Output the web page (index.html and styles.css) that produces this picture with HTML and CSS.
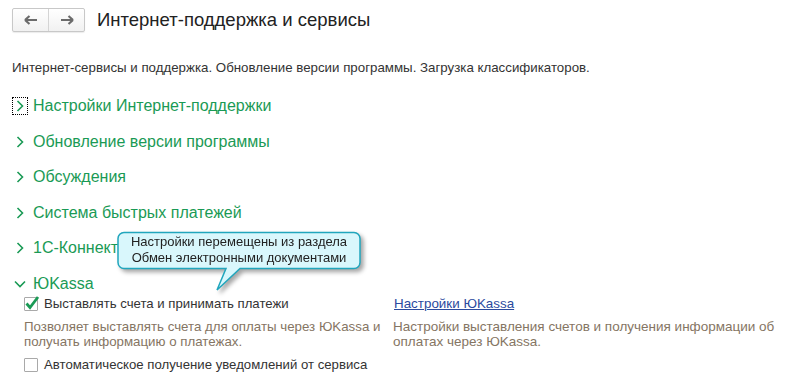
FILE: index.html
```html
<!DOCTYPE html>
<html lang="ru">
<head>
<meta charset="utf-8">
<link rel="stylesheet" href="styles.css">
</head>
<body>
<div class="page">
  <header class="head">
    <div class="nav">
      <button class="navbtn" aria-label="Назад">
        <svg width="14" height="10" viewBox="0 0 14 10"><path d="M1 5H13M1 5L5.5 1M1 5L5.5 9" stroke="#6b6b6b" stroke-width="2.2" fill="none"/></svg>
      </button>
      <button class="navbtn" aria-label="Вперёд">
        <svg width="14" height="10" viewBox="0 0 14 10"><path d="M1 5H13M13 5L8.5 1M13 5L8.5 9" stroke="#6b6b6b" stroke-width="2.2" fill="none"/></svg>
      </button>
    </div>
    <h1 class="title">Интернет-поддержка и сервисы</h1>
  </header>

  <p class="intro">Интернет-сервисы и поддержка. Обновление версии программы. Загрузка классификаторов.</p>

  <div class="groups">
    <div class="group">
      <span class="chev focus"><svg width="8" height="12" viewBox="0 0 8 12"><path d="M1.5 1L6.5 6L1.5 11" stroke="#1a9a55" stroke-width="1.6" fill="none"/></svg></span>
      <span class="gtitle">Настройки Интернет-поддержки</span>
    </div>
    <div class="group">
      <span class="chev"><svg width="8" height="12" viewBox="0 0 8 12"><path d="M1.5 1L6.5 6L1.5 11" stroke="#1a9a55" stroke-width="1.6" fill="none"/></svg></span>
      <span class="gtitle">Обновление версии программы</span>
    </div>
    <div class="group">
      <span class="chev"><svg width="8" height="12" viewBox="0 0 8 12"><path d="M1.5 1L6.5 6L1.5 11" stroke="#1a9a55" stroke-width="1.6" fill="none"/></svg></span>
      <span class="gtitle">Обсуждения</span>
    </div>
    <div class="group">
      <span class="chev"><svg width="8" height="12" viewBox="0 0 8 12"><path d="M1.5 1L6.5 6L1.5 11" stroke="#1a9a55" stroke-width="1.6" fill="none"/></svg></span>
      <span class="gtitle">Система быстрых платежей</span>
    </div>
    <div class="group">
      <span class="chev"><svg width="8" height="12" viewBox="0 0 8 12"><path d="M1.5 1L6.5 6L1.5 11" stroke="#1a9a55" stroke-width="1.6" fill="none"/></svg></span>
      <span class="gtitle">1С-Коннект</span>
    </div>
    <div class="group">
      <span class="chev down"><svg width="12" height="8" viewBox="0 0 12 8"><path d="M1 1.5L6 6.5L11 1.5" stroke="#1a9a55" stroke-width="1.6" fill="none"/></svg></span>
      <span class="gtitle">ЮKassa</span>
    </div>
  </div>

  <div class="kassa">
    <div class="col">
      <label class="check">
        <span class="box"><svg class="tick" width="16" height="16" viewBox="0 0 16 16"><path d="M2.5 8.5L6 12.5L14 2" stroke="#1a9a55" stroke-width="2.8" fill="none"/></svg></span>
        <span>Выставлять счета и принимать платежи</span>
      </label>
      <p class="note">Позволяет выставлять счета для оплаты через ЮKassa и получать информацию о платежах.</p>
      <label class="check">
        <span class="box"></span>
        <span>Автоматическое получение уведомлений от сервиса</span>
      </label>
    </div>
    <div class="col right">
      <a class="link" href="#">Настройки ЮKassa</a>
      <p class="note">Настройки выставления счетов и получения информации об оплатах через ЮKassa.</p>
    </div>
  </div>

  <div class="tip">
    <svg class="tipshape" width="260" height="70" viewBox="0 0 260 70">
      <path d="M7 1.5H237A6 6 0 0 1 243 7.5V31.5A6 6 0 0 1 237 37.5H123L100 59L109 37.5H7A6 6 0 0 1 1 31.5V7.5A6 6 0 0 1 7 1.5Z" fill="#d9f7fc" stroke="#21a6bd" stroke-width="1.5"/>
    </svg>
    <div class="tiptext">Настройки перемещены из раздела<br>Обмен электронными документами</div>
  </div>
</div>
</body>
</html>
```

FILE: styles.css
```css
* { box-sizing: border-box; }
html, body { margin: 0; padding: 0; background: #fff; }
body {
  font-family: "Liberation Sans", Arial, sans-serif;
  color: #333;
  width: 785px;
  height: 380px;
  overflow: hidden;
}
.page { position: relative; padding: 8px 12px 0 12px; }

.head { display: flex; align-items: center; height: 24px; }
.nav {
  display: flex;
  width: 73px;
  height: 24px;
  border: 1px solid #c8c8c8;
  border-radius: 2px;
  background: linear-gradient(#ffffff, #f1f1f1);
  box-shadow: 0 1px 1px rgba(0,0,0,0.08);
}
.navbtn {
  flex: 1;
  border: 0;
  background: transparent;
  padding: 0;
  display: flex;
  align-items: center;
  justify-content: center;
}
.navbtn + .navbtn { border-left: 1px solid #d4d4d4; }
.title {
  margin: 0 0 0 12px;
  font-size: 18.5px;
  font-weight: normal;
  color: #222;
  line-height: 24px;
}

.intro {
  margin: 28px 0 0 0;
  font-size: 13.3px;
  line-height: 16px;
  color: #333;
}

.groups {
  display: flex;
  flex-direction: column;
  gap: 13.5px;
  margin-top: 19px;
}
.group { display: flex; align-items: center; height: 22px; }
.chev {
  width: 16px;
  height: 18px;
  display: flex;
  align-items: center;
  justify-content: center;
  margin-right: 5px;
}
.chev.focus { outline: 1px dotted #000; outline-offset: -1px; }
.gtitle {
  font-size: 16px;
  color: #1a9a55;
  line-height: 22px;
}

.kassa {
  display: flex;
  padding-left: 12px;
  margin-top: 1px;
}
.col { width: 369px; flex: none; }
.col.right { width: 385px; }
.check {
  display: flex;
  align-items: center;
  height: 16px;
  font-size: 13.2px;
  color: #333;
}
.box {
  position: relative;
  width: 14px;
  height: 14px;
  border: 1px solid #a9a9a9;
  border-radius: 1px;
  background: #fff;
  margin-right: 6px;
  flex: none;
}
.tick { position: absolute; left: -1px; top: -3px; }
.note {
  margin: 7.5px 0 7.5px 0;
  font-size: 13.3px;
  line-height: 15px;
  color: #857563;
}
.col:first-child .note { width: 362px; }
.col.right .note { font-size: 13.5px; }
.link {
  display: block;
  height: 16px;
  line-height: 16px;
  font-size: 13.4px;
  color: #2b4a9e;
  text-decoration: underline;
  padding-left: 1px;
}

.tip {
  position: absolute;
  left: 117px;
  top: 231px;
  width: 260px;
  height: 70px;
  filter: drop-shadow(3px 3px 2px rgba(0,0,0,0.35));
}
.tipshape { position: absolute; left: 0; top: 0; }
.tiptext {
  position: absolute;
  left: 1px;
  top: 1px;
  width: 242px;
  text-align: center;
  font-size: 13px;
  line-height: 16px;
  color: #222;
  padding-top: 2px;
}
```
